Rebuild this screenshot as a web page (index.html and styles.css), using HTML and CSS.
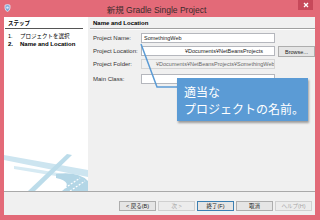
FILE: index.html
```html
<!DOCTYPE html>
<html lang="ja">
<head>
<meta charset="utf-8">
<title>新規 Gradle Single Project</title>
<link rel="stylesheet" href="styles.css">
</head>
<body>
<div class="window">
  <div class="titlebar">
    <svg class="appicon" width="7" height="8" viewBox="0 0 7 8"><path d="M1 1.2 Q3.5 0 6 1.2 L6 4 Q6 6.5 3.5 7.6 Q1 6.5 1 4 Z" fill="#7fa7d6" stroke="#e8eef7" stroke-width="0.8"/><circle cx="3.5" cy="3.6" r="1.2" fill="#dfe9f6"/></svg>
    <span class="title">新規 Gradle Single Project</span>
    <span class="close"><svg width="6" height="6" viewBox="0 0 6 6"><path d="M1 1 L5 5 M5 1 L1 5" stroke="#fff" stroke-width="1.3"/></svg></span>
  </div>
  <div class="frame">
    <div class="main">
      <aside class="steps">
        <div class="steps-head">ステップ</div>
        <ol class="step-list">
          <li><span class="num">1.</span>プロジェクトを選択</li>
          <li class="current"><span class="num">2.</span>Name and Location</li>
        </ol>
        <div class="wm-spacer"></div>
        <svg class="watermark" width="84" height="37" viewBox="0 0 84 37">
          <path d="M0 1 L84 16 L84 23 L0 6 Z" fill="#cde5f0"/>
          <path d="M10 12 Q40 16 64 21 L64 24 Q40 20 10 15 Z" fill="#d6eaf3"/>
          <path d="M63 0 L68 1 L31 37 L24 37 Z" fill="#bcdcea"/>
          <path d="M52 20 Q74 17 84 27 L84 37 L58 37 Q70 28 52 24 Z" fill="#b3d6e6"/>
          <path d="M61 34 L76 24 M66 37 L81 27" stroke="#ffffff" stroke-width="1.2" stroke-dasharray="2 1.5"/>
        </svg>
      </aside>
      <section class="panel">
        <div class="panel-head">Name and Location</div>
        <div class="form">
          <span class="label">Project Name:</span>
          <div class="field">SomethingWeb</div>
          <span class="spacer"></span>
          <span class="label">Project Location:</span>
          <div class="field loc">¥Documents¥NetBeansProjects</div>
          <button class="btn browse">Browse...</button>
          <span class="label">Project Folder:</span>
          <div class="field disabled">¥Documents¥NetBeansProjects¥SomethingWeb</div>
          <span class="spacer"></span>
          <span class="label main-label">Main Class:</span>
          <div class="field main-field"></div>
          <span class="spacer"></span>
        </div>
        <svg class="connector" width="227" height="175" viewBox="0 0 227 175"><path d="M53 27 L69 70 L89 70" fill="none" stroke="#5b9bd5" stroke-width="1.5"/></svg>
        <div class="callout">適当な<br>プロジェクトの名前。</div>
      </section>
    </div>
    <div class="footer">
      <button class="btn">&lt; 戻る(B)</button>
      <button class="btn off">次 &gt;</button>
      <button class="btn default">終了(F)</button>
      <button class="btn">取消</button>
      <button class="btn off">ヘルプ(H)</button>
    </div>
  </div>
</div>
</body>
</html>
```
FILE: styles.css
```css
* { box-sizing: border-box; }
html, body { margin: 0; padding: 0; }
body {
  width: 320px;
  height: 220px;
  background: #e36a78;
  font-family: "Liberation Sans", "Noto Sans CJK JP", sans-serif;
  font-size: 6px;
  color: #000;
  overflow: hidden;
}
.window {
  width: 320px;
  height: 220px;
  display: flex;
  flex-direction: column;
}
.titlebar {
  height: 17px;
  flex-shrink: 0;
  display: flex;
  align-items: center;
  position: relative;
  padding-left: 4px;
}
.appicon { display: block; margin-top: -1px; }
.title {
  flex: 1;
  text-align: center;
  font-size: 8.5px;
  color: #3a2a2c;
  padding-left: 4px;
}
.close {
  align-self: flex-start;
  width: 15px;
  height: 10px;
  background: #c7495a;
  margin-right: 7px;
  display: flex;
  align-items: center;
  justify-content: center;
}
.close svg { display: block; }
.frame {
  flex: 1;
  display: flex;
  flex-direction: column;
  margin: 0 5px 5px 4px;
  background: #f0f0f0;
}
.main {
  height: 175px;
  flex-shrink: 0;
  display: flex;
  border-bottom: 1px solid #a9a9a9;
}
.steps {
  width: 84px;
  flex-shrink: 0;
  background: #fff;
  display: flex;
  flex-direction: column;
  padding-top: 2px;
}
.steps-head {
  margin: 0 5px 0 1px;
  padding-left: 3px;
  line-height: 9px;
  font-weight: bold;
  border-bottom: 1px solid #555;
  font-size: 5.5px;
}
.step-list {
  list-style: none;
  margin: 3px 0 0;
  padding: 0 0 0 4px;
  font-size: 5.5px;
  line-height: 8px;
}
.step-list li { display: flex; }
.step-list .num { width: 12px; }
.step-list .current { font-weight: bold; font-size: 6px; }
.wm-spacer { flex: 1; }
.watermark { display: block; flex-shrink: 0; width: 84px; height: 37px; }
.panel {
  flex: 1;
  position: relative;
  padding: 2px 3px 0 2px;
}
.panel-head {
  line-height: 9px;
  padding-left: 3px;
  font-weight: bold;
  border-bottom: 1px solid #a0a0a0;
  box-shadow: 0 1px 0 #fff;
}
.form {
  display: grid;
  grid-template-columns: 45px 134px 37px;
  grid-auto-rows: 10px;
  column-gap: 3px;
  row-gap: 3px;
  margin-top: 4px;
  padding-left: 3px;
  align-items: center;
}
.label { color: #333; white-space: nowrap; }
.main-label, .main-field { margin-top: 4px; }
.field {
  height: 10px;
  background: #fff;
  border: 1px solid #b5b7bd;
  line-height: 8px;
  padding-left: 2px;
  white-space: nowrap;
  overflow: hidden;
  font-size: 5.5px;
  color: #222;
}
.field.loc { padding-left: 43px; }
.field.disabled {
  background: #f0f0f0;
  border-color: #d5d5d5;
  color: #6a6a6a;
  padding-left: 14px;
}
.btn {
  font-family: "Liberation Sans", "Noto Sans CJK JP", sans-serif;
  font-size: 5.5px;
  width: 37px;
  height: 10px;
  padding: 0;
  margin: 0;
  background: #e5e5e5;
  border: 1px solid #adadad;
  color: #222;
  line-height: 8px;
  text-align: center;
}
.btn.browse { height: 11px; margin-top: 1px; }
.btn.off { color: #a6a6a6; border-color: #d0d0d0; background: #ececec; }
.btn.default { border-color: #3c7fb1; }
.connector {
  position: absolute;
  left: 0;
  top: 0;
  pointer-events: none;
}
.callout {
  position: absolute;
  left: 89px;
  top: 61px;
  width: 131px;
  height: 43px;
  background: #5b9bd5;
  color: #fff;
  font-family: "Noto Sans CJK JP", sans-serif;
  font-size: 12px;
  line-height: 17px;
  padding: 5px 0 0 7px;
  white-space: nowrap;
  box-shadow: 1px 2px 2px rgba(0, 0, 0, 0.35);
}
.footer {
  flex: 1;
  display: flex;
  justify-content: flex-end;
  gap: 2px;
  padding: 9px 3px 0 0;
  align-items: flex-start;
}
```
